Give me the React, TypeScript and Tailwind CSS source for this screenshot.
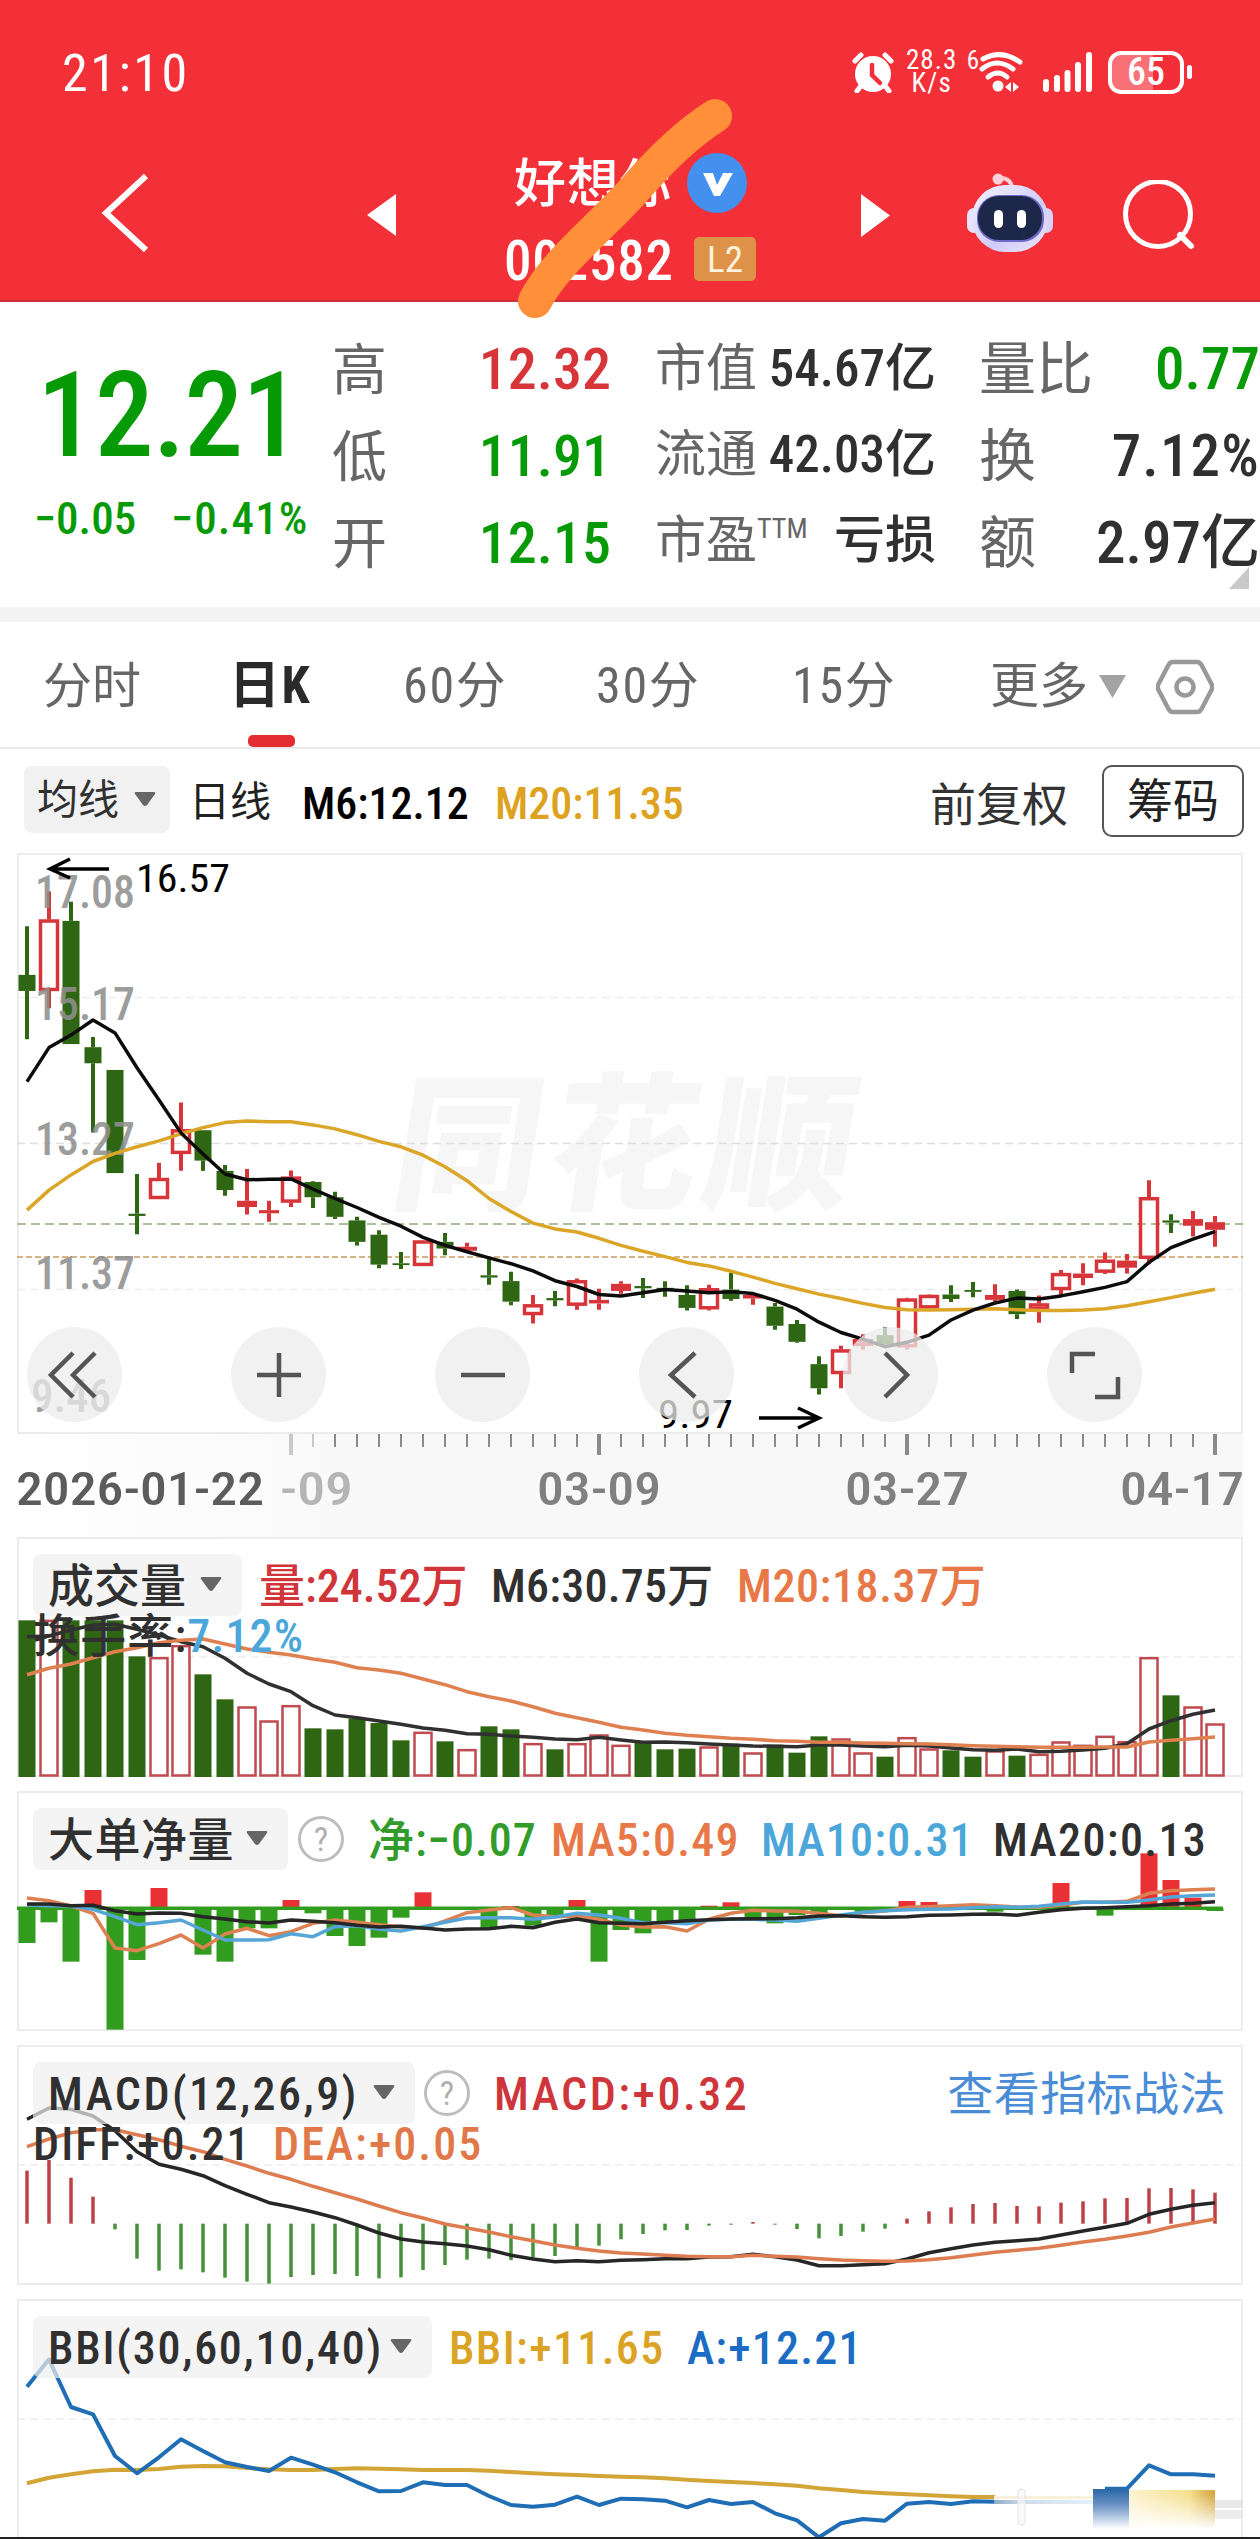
import type { ReactNode } from "react";

type Candle = [high: number, top: number, bottom: number, low: number, kind: "up" | "flat" | "down"];

const STEP = 22;
const FIRST_X = 27;
const xAt = (i: number) => FIRST_X + i * STEP;

const RED = "#d8353b";
const GREEN = "#2f6613";

const candles: Candle[] = [
  [193, 302, 338, 446, "down"],
  [115, 178, 338, 377, "up"],
  [138, 181, 457, 457, "down"],
  [441, 464, 500, 655, "down"],
  [515, 515, 746, 746, "down"],
  [748, 837, 842, 883, "down"],
  [723, 757, 804, 804, "up"],
  [588, 648, 703, 741, "up"],
  [650, 650, 718, 741, "down"],
  [728, 741, 784, 797, "down"],
  [737, 808, 822, 839, "flat"],
  [808, 829, 836, 855, "flat"],
  [740, 754, 812, 822, "up"],
  [764, 766, 800, 824, "down"],
  [788, 800, 844, 849, "down"],
  [844, 852, 900, 908, "down"],
  [874, 884, 951, 959, "down"],
  [923, 948, 952, 961, "down"],
  [897, 897, 954, 954, "up"],
  [880, 900, 915, 930, "down"],
  [902, 911, 920, 925, "flat"],
  [937, 975, 980, 996, "down"],
  [967, 988, 1034, 1042, "down"],
  [1019, 1040, 1064, 1083, "up"],
  [1010, 1026, 1031, 1044, "down"],
  [982, 986, 1043, 1052, "up"],
  [1005, 1030, 1038, 1052, "flat"],
  [988, 994, 1010, 1016, "flat"],
  [981, 999, 1004, 1026, "down"],
  [988, 1003, 1007, 1023, "down"],
  [997, 1019, 1048, 1054, "down"],
  [996, 1004, 1051, 1054, "up"],
  [970, 1007, 1028, 1032, "down"],
  [1017, 1019, 1027, 1041, "flat"],
  [1037, 1045, 1088, 1097, "down"],
  [1075, 1084, 1124, 1126, "down"],
  [1156, 1174, 1228, 1242, "down"],
  [1133, 1141, 1196, 1228, "up"],
  [1107, 1118, 1133, 1141, "up"],
  [1091, 1109, 1130, 1137, "down"],
  [1025, 1027, 1136, 1141, "up"],
  [1018, 1019, 1049, 1049, "up"],
  [997, 1018, 1028, 1035, "down"],
  [990, 1008, 1012, 1024, "down"],
  [995, 1019, 1030, 1034, "flat"],
  [1007, 1010, 1062, 1073, "down"],
  [1020, 1038, 1053, 1081, "up"],
  [963, 970, 1008, 1020, "up"],
  [948, 971, 981, 997, "flat"],
  [924, 940, 969, 972, "up"],
  [927, 942, 958, 971, "flat"],
  [762, 800, 938, 950, "up"],
  [838, 852, 857, 880, "down"],
  [831, 849, 864, 888, "flat"],
  [842, 856, 873, 911, "flat"],
];

const priceM6 = [
  541, 465, 437, 403, 432, 510, 582, 656, 703, 748, 761, 760, 759, 782, 803, 823, 845, 865, 890, 908, 922, 936, 949,
  965, 987, 1000, 1018, 1021, 1014, 1007, 1010, 1014, 1012, 1016, 1031, 1051, 1080, 1103, 1118, 1135, 1125, 1109, 1075,
  1053, 1037, 1026, 1028, 1021, 1012, 1002, 989, 946, 913, 894, 877,
];

const priceM20 = [
  829, 784, 750, 720, 702, 687, 674, 658, 644, 633, 629, 631, 631, 638, 647, 660, 675, 687, 706, 732, 763, 803, 832,
  858, 871, 878, 892, 908, 921, 933, 946, 954, 966, 979, 993, 1005, 1017, 1027, 1038, 1047, 1052, 1053, 1052, 1051,
  1050, 1052, 1054, 1054, 1053, 1050, 1043, 1034, 1025, 1015, 1006,
];

// positive closes up (hollow red), negative closes down (solid green)
const volumes = [
  -470, 470, -470, -470, -470, -362, 358, 394, -308, -233, 210, 168, 214, -146, -143, -175, -162, -110, 134, -107, 82,
  -152, -143, 100, -83, 100, 126, 95, -107, -83, -85, 90, -100, 72, -97, -73, -122, 114, 72, -61, 118, 84, -80, -61,
  78, -64, 68, 105, 95, 122, 106, 358, -245, 210, 159,
];

const volumeM6 = [
  320, 318, 300, 285, 283, 298, 315, 335, 350, 385, 430, 462, 485, 527, 555, 563, 573, 583, 594, 601, 611, 613, 618,
  622, 627, 629, 622, 630, 637, 636, 638, 642, 645, 648, 649, 650, 645, 645, 648, 650, 646, 648, 654, 659, 661, 657,
  665, 664, 660, 655, 641, 597, 572, 553, 540,
];

const volumeM20 = [
  434, 415, 402, 383, 365, 353, 338, 331, 327, 342, 357, 367, 375, 387, 397, 413, 420, 430, 447, 464, 485, 500, 513,
  530, 550, 563, 577, 592, 600, 610, 616, 620, 625, 628, 632, 634, 637, 637, 639, 640, 641, 642, 644, 647, 649, 650,
  652, 652, 652, 651, 651, 636, 631, 626, 621,
];

const netOrders = [
  -104, -42, -160, 55, -364, -155, 61, -4, -139, -160, -60, -60, 25, -15, -83, -113, -88, -28, 48, -3, -5, -60, 7, -52,
  -25, 25, -160, -65, -75, -45, -35, 8, 18, -30, -45, -20, -18, -4, -10, -10, 22, 19, -4, -4, -10, -5, -3, 76, 4, -22,
  -2, 165, 85, 32, -8,
];

const netMa20 = [
  1122, 1122, 1127, 1126, 1142, 1152, 1149, 1150, 1160, 1167, 1175, 1179, 1170, 1174, 1178, 1186, 1191, 1189, 1194,
  1200, 1197, 1196, 1189, 1193, 1177, 1167, 1178, 1180, 1181, 1177, 1172, 1169, 1167, 1166, 1166, 1163, 1158, 1157,
  1160, 1162, 1160, 1156, 1155, 1153, 1152, 1156, 1147, 1139, 1135, 1133, 1130, 1127, 1122, 1120, 1115,
];

const netMa10 = [
  1125, 1127, 1128, 1138, 1160, 1184, 1178, 1170, 1200, 1230, 1230, 1229, 1211, 1220, 1190, 1187, 1198, 1203, 1190,
  1177, 1164, 1163, 1163, 1168, 1161, 1150, 1155, 1165, 1178, 1178, 1181, 1170, 1168, 1168, 1170, 1174, 1165, 1155,
  1147, 1142, 1139, 1138, 1137, 1133, 1130, 1132, 1129, 1122, 1116, 1117, 1117, 1110, 1101, 1097, 1095,
];

const netMa5 = [
  1104, 1112, 1128, 1150, 1254, 1262, 1241, 1215, 1254, 1212, 1195, 1217, 1205, 1180, 1170, 1177, 1184, 1190, 1195,
  1173, 1148, 1140, 1133, 1155, 1160, 1158, 1168, 1185, 1191, 1190, 1203, 1168, 1150, 1141, 1143, 1144, 1150, 1157,
  1148, 1143, 1132, 1130, 1127, 1124, 1127, 1131, 1132, 1125, 1117, 1117, 1114, 1090, 1082, 1079, 1077,
];

const macdEnds = [
  422, 390, 443, 500, 598, 686, 722, 718, 727, 743, 755, 761, 741, 735, 732, 738, 745, 742, 720, 705, 689, 686, 690,
  683, 678, 652, 647, 628, 612, 601, 600, 587, 584, 576, 584, 597, 625, 618, 605, 596, 566, 544, 532, 522, 519, 528,
  529, 518, 514, 505, 504, 475, 474, 478, 488,
];

const macdDiff = [
  268, 234, 238, 258, 302, 365, 403, 418, 437, 467, 493, 518, 531, 546, 563, 585, 609, 627, 636, 641, 648, 659, 676,
  687, 695, 692, 695, 691, 689, 686, 686, 681, 680, 673, 680, 690, 707, 707, 704, 701, 687, 668, 656, 645, 637, 632,
  627, 615, 603, 592, 580, 553, 538, 526, 518,
];

const macdDea = [
  350, 327, 308, 299, 299, 314, 329, 349, 365, 388, 408, 430, 448, 469, 488, 507, 528, 548, 564, 582, 594, 606, 620,
  632, 645, 655, 663, 669, 672, 676, 679, 680, 680, 676, 679, 681, 686, 690, 692, 694, 693, 689, 683, 675, 667, 661,
  655, 646, 636, 628, 618, 607, 591, 579, 567,
];

const bbiClose = [
  1070, 988, 1131, 1153, 1278, 1330, 1282, 1228, 1263, 1297, 1311, 1323, 1283, 1304, 1327, 1357, 1384, 1383, 1357,
  1365, 1365, 1398, 1425, 1430, 1424, 1400, 1425, 1406, 1408, 1412, 1432, 1410, 1422, 1416, 1450, 1471, 1522, 1480,
  1467, 1472, 1421, 1416, 1422, 1414, 1415,
];

const bbiTail = [1376, 1376, 1306, 1333, 1333, 1337];

const bbiAverage = [
  1360, 1343, 1333, 1324, 1319, 1320, 1317, 1310, 1308, 1309, 1314, 1318, 1320, 1320, 1317, 1315, 1316, 1318, 1320,
  1320, 1320, 1322, 1326, 1330, 1333, 1335, 1338, 1340, 1342, 1345, 1349, 1353, 1356, 1359, 1363, 1367, 1375, 1380,
  1386, 1390, 1393, 1396, 1399, 1401, 1401,
];

type SeriesProps = {
  values: number[];
  top: number;
  scale?: number;
  color: string;
  width?: number;
  from?: number;
};

function Series({ values, top, scale = 3, color, width = 3.5, from = 0 }: SeriesProps) {
  const points = values.map((v, i) => `${xAt(i + from)},${((v - top) / scale).toFixed(1)}`).join(" ");
  return <polyline points={points} fill="none" stroke={color} strokeWidth={width} strokeLinejoin="round" />;
}

function GridLine({ y, color = "#ededed", dash = "8 5" }: { y: number; color?: string; dash?: string }) {
  return <line x1={17} x2={1243} y1={y} y2={y} stroke={color} strokeWidth={1.5} strokeDasharray={dash} />;
}

function Label({ x, y, width, children, fill }: { x: number; y: number; width: number; children: string; fill?: string }) {
  return (
    <text x={x} y={y} textLength={width} lengthAdjust="spacingAndGlyphs" fill={fill}>
      {children}
    </text>
  );
}

function Caret() {
  return (
    <svg className="h-[15px] w-[22px]" viewBox="0 0 22 15">
      <path d="M2 0h18q2 0 1 2l-8 11q-2 2-4 0L1 2q-1-2 1-2z" fill="#666" />
    </svg>
  );
}

function Help() {
  return (
    <span className="flex size-[46px] shrink-0 items-center justify-center rounded-full border-[3px] border-[#bdbdbd] text-[34px] font-normal leading-none text-[#b0b0b0]">
      ?
    </span>
  );
}

function Panel({ children, chart }: { children: ReactNode; chart: ReactNode }) {
  return (
    <section className="relative h-[240px] border-2 border-[#ececec]">
      <svg className="absolute -left-0.5 -top-0.5 h-[240px] w-[1226px]" viewBox="17 0 1226 240">
        {chart}
      </svg>
      <div className="relative pl-[14px] pt-[14px] text-[46px] font-medium leading-[50px] text-[#303030]">
        {children}
      </div>
    </section>
  );
}

function Legend({ children }: { children: ReactNode }) {
  return <div className="flex h-[63px] items-center whitespace-nowrap">{children}</div>;
}

function Picker({ children, className }: { children: ReactNode; className: string }) {
  return (
    <div
      className={`flex h-[62px] shrink-0 items-center justify-between rounded-lg bg-[#efefef]/70 pl-[15px] pr-5 ${className}`}
    >
      <span className="pt-[3px]">{children}</span>
      <Caret />
    </div>
  );
}

function StatusBar() {
  return (
    <div className="flex h-[144px] items-center pl-[62px] pr-[68px] text-white">
      <span className="mt-1 text-[52px] font-normal tracking-[0.05em]">21:10</span>
      <div className="ml-auto flex items-center">
        <svg className="h-[42px] w-[42px]" viewBox="0 0 42 42">
          <circle cx="21" cy="23" r="18" fill="#fff" />
          <path
            d="M3 10l6-6M39 10l-6-6M8 36l-3 4M34 36l3 4"
            stroke="#fff"
            strokeWidth="5"
            strokeLinecap="round"
            fill="none"
          />
          <path d="M20 14v10l8 8" stroke="#f22f38" strokeWidth="4.5" fill="none" strokeLinecap="round" />
        </svg>
        <div className="ml-3 flex w-[52px] flex-col items-center text-[27px] font-normal leading-[23px]">
          <span className="tracking-[0.04em]">28.3</span>
          <span className="tracking-[0.04em]">K/s</span>
        </div>
        <span className="ml-[9px] self-start text-[25px] leading-[23px]">6</span>
        <svg className="h-[42px] w-[44px]" viewBox="0 0 44 42">
          <g fill="none" stroke="#fff" strokeWidth="5" strokeLinecap="round">
            <path d="M4 8q18-10 37 3" />
            <path d="M3 18q15-12 31 0" />
            <path d="M9 26q10-8 19 0" />
          </g>
          <circle cx="19" cy="35" r="5.5" fill="#fff" />
          <path d="M26 36l6-5v10zM40 36l-6-5v10z" fill="#fff" />
        </svg>
        <svg className="ml-5 h-[40px] w-[50px]" viewBox="0 0 50 40">
          <rect x="0" y="27" width="6" height="13" rx="3" fill="#fff" />
          <rect x="11" y="23" width="6" height="17" rx="3" fill="#fff" />
          <rect x="21.5" y="18" width="6" height="22" rx="3" fill="#fff" />
          <rect x="32" y="10" width="6" height="30" rx="3" fill="#fff" />
          <rect x="43" y="0" width="6" height="40" rx="3" fill="#fff" />
        </svg>
        <div className="ml-[15px] flex h-[43px] w-[76px] items-center justify-center rounded-[13px] border-4 border-white bg-linear-to-r from-[#f97077] from-60% to-[#f22f38] to-60% text-[38px] font-medium leading-none">
          65
        </div>
        <span className="ml-[3px] h-[14px] w-[5px] rounded-full bg-white" />
      </div>
    </div>
  );
}

function Robot() {
  return (
    <svg className="h-[82px] w-[88px]" viewBox="0 0 88 82">
      <defs>
        <linearGradient id="shell" x1="0" y1="0" x2="1" y2="1">
          <stop offset="0" stopColor="#f4f3ff" />
          <stop offset="0.6" stopColor="#cfcdf8" />
          <stop offset="1" stopColor="#efe6fb" />
        </linearGradient>
      </defs>
      <circle cx="32" cy="7" r="5.5" fill="#ffd0d8" />
      <path d="M34 6q11 0 12 10" stroke="#ffd0d8" strokeWidth="4" fill="none" />
      <rect x="1" y="36" width="14" height="25" rx="7" fill="#e8e3fb" />
      <rect x="73" y="36" width="14" height="25" rx="7" fill="#d9d2f7" />
      <rect x="6" y="13" width="76" height="67" rx="33" fill="url(#shell)" />
      <rect x="11" y="23" width="67" height="47" rx="22" fill="#6f69c9" />
      <rect x="12" y="24" width="64" height="44" rx="21" fill="#1c2749" />
      <rect x="28" y="38" width="9" height="18" rx="4.5" fill="#fff" />
      <rect x="51" y="38" width="9" height="18" rx="4.5" fill="#fff" />
    </svg>
  );
}

function Header() {
  return (
    <header className="relative h-[302px] border-b-2 border-[#c9323a] bg-[#f32f38] text-white">
      <StatusBar />
      <div className="flex items-start">
        <svg className="ml-[99px] mt-7 h-[82px] w-[50px]" viewBox="0 0 50 82">
          <path d="M47 4L7 41l40 37" fill="none" stroke="#fff" strokeWidth="6" />
        </svg>
        <svg className="ml-[218px] mt-[50px] h-[42px] w-[30px]" viewBox="0 0 30 42">
          <path d="M29 0v42L0 21z" fill="#fff" />
        </svg>
        <div className="ml-[107px] w-[260px]">
          <div className="ml-[10px] mt-2 flex h-[62px] items-center">
            <span className="mt-1 w-[173px] text-[52px] font-medium leading-[62px] tracking-[0.02em]">好想你</span>
            <svg className="size-[60px]" viewBox="0 0 60 60">
              <circle cx="30" cy="30" r="30" fill="#4490ee" />
              <path d="M16 20h10l4 12 6-12h10L33 43h-6z" fill="#fff" />
            </svg>
          </div>
          <div className="mt-[14px] flex h-[62px] items-center">
            <span className="mt-1 w-[190px] text-[55px] font-medium leading-[62px] tracking-[0.015em]">002582</span>
            <span className="flex h-[44px] w-[62px] items-center justify-center rounded-[5px] bg-[#de9149] text-[37px] font-normal leading-none text-[#fff3dc]">
              L2
            </span>
          </div>
        </div>
        <svg className="ml-[97px] mt-[50px] h-[43px] w-[30px]" viewBox="0 0 30 43">
          <path d="M0 0v43l29-21.500z" fill="#fff" />
        </svg>
        <div className="ml-[75px] mt-[28px]">
          <Robot />
        </div>
        <svg className="ml-[68px] mt-9 h-[72px] w-[76px]" viewBox="0 0 76 72">
          <circle cx="36" cy="34" r="32.500" fill="none" stroke="#fff" strokeWidth="5" />
          <path d="M58 55l11 11" stroke="#fff" strokeWidth="6" strokeLinecap="round" />
        </svg>
      </div>
      {/* highlighter stroke drawn across the stock name */}
      <svg className="absolute left-[500px] top-[80px] h-[250px] w-[250px]" viewBox="500 80 250 250">
        <path
          d="M535 301C555 262 600 228 634 190C660 160 685 135 715 116"
          fill="none"
          stroke="#ff8f39"
          strokeWidth="34"
          strokeLinecap="round"
        />
      </svg>
    </header>
  );
}

function QuoteRow({ label, value, color = "text-[#303030]" }: { label: ReactNode; value: string; color?: string }) {
  return (
    <div className="flex justify-between whitespace-nowrap">
      <span className="font-normal text-[#666]">{label}</span>
      <span className={color}>{value}</span>
    </div>
  );
}

function Quote() {
  return (
    <section className="relative flex h-[305px] overflow-hidden font-medium">
      <div className="w-[332px] pl-[34px] pt-[49px] text-[#069a06]">
        <p className="pl-[3px] text-[118px] leading-[130px] tracking-[-0.01em]">12.21</p>
        <div className="mt-[13px] flex whitespace-nowrap text-[45px] leading-[50px]">
          <span className="w-[137px]">−0.05</span>
          <span className="tracking-[0.025em]">−0.41%</span>
        </div>
      </div>
      <div className="w-[279px] pt-6 text-[58px] leading-[86px]">
        <QuoteRow label={<span className="text-[55px]">高</span>} value="12.32" color="text-[#d8353b]" />
        <QuoteRow label={<span className="text-[55px]">低</span>} value="11.91" color="text-[#069a06]" />
        <QuoteRow label={<span className="text-[55px]">开</span>} value="12.15" color="text-[#069a06]" />
      </div>
      <div className="ml-[44px] w-[281px] pt-6 text-[51px] leading-[86px]">
        <QuoteRow label="市值" value="54.67亿" />
        <QuoteRow label="流通" value="42.03亿" />
        <QuoteRow
          label={
            <span className="flex">
              市盈<span className="-mt-3 text-[28px]">TTM</span>
            </span>
          }
          value="亏损"
        />
      </div>
      <div className="ml-[43px] w-[281px] pt-6 text-[59px] leading-[86px]">
        <QuoteRow label={<span className="text-[57px]">量比</span>} value="0.77" color="text-[#069a06]" />
        <QuoteRow label={<span className="text-[57px]">换</span>} value="7.12%" color="tracking-[0.02em] text-[#303030]" />
        <QuoteRow label={<span className="text-[57px]">额</span>} value="2.97亿" />
      </div>
      <svg className="absolute bottom-[18px] right-[11px] h-[22px] w-[20px]" viewBox="0 0 20 22">
        <path d="M20 0v22H0z" fill="#c9c9c9" />
      </svg>
    </section>
  );
}

function PeriodTabs() {
  return (
    <nav className="flex h-[127px] items-center border-b-2 border-[#e8e8e8] pl-[43px] pt-1 text-[49px] font-normal text-[#666]">
      <span className="w-[186px]">分时</span>
      <span className="relative flex h-full w-[174px] items-center text-[51px] font-bold tracking-[0.03em] text-[#2a2a2a]">
        日K
        <span className="absolute bottom-0 left-[19px] h-3 w-[47px] rounded-[5px] bg-[#e32d33]" />
      </span>
      <span className="w-[193px] text-[50px] tracking-[0.035em]">60分</span>
      <span className="w-[196px] text-[50px] tracking-[0.035em]">30分</span>
      <span className="w-[198px] text-[50px] tracking-[0.035em]">15分</span>
      <span>更多</span>
      <svg className="ml-[11px] h-[23px] w-[27px]" viewBox="0 0 27 23">
        <path d="M0 0h27L13.500 23z" fill="#a3a3a3" />
      </svg>
      <svg className="ml-[30px] h-[56px] w-[58px]" viewBox="0 0 58 56">
        <path
          d="M17 3h24q3 0 4.500 3l10 19q1.500 3 0 6l-10 19q-1.500 3-4.500 3H17q-3 0-4.500-3l-10-19q-1.500-3 0-6l10-19Q14 3 17 3z"
          fill="none"
          stroke="#999"
          strokeWidth="4.500"
        />
        <circle cx="29" cy="28" r="8.500" fill="none" stroke="#999" strokeWidth="4.500" />
      </svg>
    </nav>
  );
}

function AverageBar() {
  return (
    <div className="flex h-[104px] items-center pl-6 pr-4 text-[44px] font-medium">
      <div className="mb-1 flex h-[67px] w-[146px] items-center justify-between rounded-lg bg-[#f1f1f1] pl-[13px] pr-[14px] text-[41px] font-normal text-[#303030]">
        <span className="pt-1">均线</span>
        <Caret />
      </div>
      <span className="ml-[19px] mt-1 w-[113px] text-[41px] font-normal text-[#222]">日线</span>
      <span className="mt-1.5 w-[193px] whitespace-nowrap text-black">M6:12.12</span>
      <span className="mt-1.5 whitespace-nowrap text-[#dda220]">M20:11.35</span>
      <span className="ml-auto mt-2 text-[46px] font-normal text-[#333]">前复权</span>
      <span className="ml-[34px] flex h-[72px] w-[142px] items-center justify-center rounded-[10px] border-2 border-[#555] text-[46px] font-normal text-[#222]">
        筹码
      </span>
    </div>
  );
}

const controls: { name: string; path: string }[] = [
  { name: "first", path: "M46 26L24 48l22 22M68 26L46 48l22 22" },
  { name: "zoom in", path: "M26 48h44M48 26v44" },
  { name: "zoom out", path: "M26 48h44" },
  { name: "previous", path: "M56 26L32 48l24 22" },
  { name: "next", path: "M42 26l22 22-22 22" },
  { name: "fullscreen", path: "M25 46V27h23M71 50v20H48" },
];

const priceY = (v: number) => (v - 29) / 2.24;

function PriceChart() {
  return (
    <section className="relative h-[581px] border-2 border-[#ececec]">
      <svg className="absolute -left-0.5 -top-0.5 h-[581px] w-[1226px]" viewBox="17 0 1226 581">
        <text
          x="420"
          y="345"
          fontSize="148"
          fontWeight="900"
          fill="#f6f6f6"
          textLength="460"
          transform="translate(22 0) skewX(-9)"
        >
          同花顺
        </text>
        <GridLine y={144.5} />
        <GridLine y={290.5} color="#dedede" />
        <GridLine y={436.5} />
        <GridLine y={371} color="#8fae7c" dash="9 5" />
        <GridLine y={404} color="#c99a5a" dash="6 3" />
        {candles.map(([high, top, bottom, low, kind], i) => {
          const x = xAt(i);
          const color = kind === "down" ? GREEN : RED;
          const y = priceY(top);
          const h = priceY(bottom) - y;
          return (
            <g key={i} stroke={color} fill={color}>
              <path d={`M${x} ${priceY(high)}V${y}M${x} ${y + h}V${priceY(low)}`} strokeWidth="4" />
              {kind === "up" && (
                <rect x={x - 8.5} y={y + 1.5} width={17} height={h - 3} fill="none" strokeWidth="3.500" />
              )}
              {kind === "flat" && <rect x={x - 10} y={y} width={20} height={h} stroke="none" />}
              {kind === "down" && <rect x={x - 8.5} y={y} width={17} height={h} stroke="none" />}
            </g>
          );
        })}
        <g fill="#8f8f8f" fillOpacity="0.9" fontSize="46" fontWeight="500">
          <Label x={35} y={55} width={100}>17.08</Label>
          <Label x={35} y={167} width={100}>15.17</Label>
          <Label x={35} y={302} width={100}>13.27</Label>
          <Label x={35} y={436} width={100}>11.37</Label>
          <Label x={31} y={559} width={80}>9.46</Label>
        </g>
        <Series values={priceM20} top={29} scale={2.24} color="#dba528" />
        <Series values={priceM6} top={29} scale={2.24} color="#0c0c0c" />
        <g fill="none" stroke="#000" strokeWidth="3.500">
          <path d="M109 16H50M70 6L50 16l20 9" />
          <path d="M759 565h60M798 555l21 10-21 10" />
        </g>
        <g fontSize="39" fill="#000">
          <Label x={136} y={39} width={94}>16.57</Label>
          <Label x={658} y={575} width={75}>9.97</Label>
        </g>
      </svg>
      <div className="absolute bottom-[10px] left-[8px] flex gap-[109px]">
        {controls.map(({ name, path }) => (
          <button key={name} aria-label={name} className="size-[95px] rounded-full bg-[#ececec]/75">
            <svg className="size-[95px]" viewBox="0 0 95 95">
              <path d={path} fill="none" stroke="#555" strokeWidth="4.500" />
            </svg>
          </button>
        ))}
      </div>
    </section>
  );
}

function DateAxis() {
  const ticks = Array.from({ length: 43 }, (_, k) => k + 12);
  return (
    <div className="h-[103px] bg-linear-to-r from-white to-[#f8f8f8] to-30%">
      <svg className="h-[103px] w-[1226px]" viewBox="17 0 1226 103">
        {ticks.map((i) => {
          const major = i === 12 || i === 26 || i === 40 || i === 54;
          return (
            <line
              key={i}
              x1={xAt(i)}
              x2={xAt(i)}
              y1={0}
              y2={major ? 21 : 13}
              stroke={i < 14 ? "#c9c9c9" : "#8a8a8a"}
              strokeWidth={major ? 4 : 2}
            />
          );
        })}
        <g fontSize="46.500" fontWeight="500" fill="#808080">
          <Label x={16} y={71} width={248} fill="#5c5c5c">2026-01-22</Label>
          <Label x={280} y={71} width={73} fill="#b5b5b5">-09</Label>
          <Label x={537} y={71} width={124}>03-09</Label>
          <Label x={845} y={71} width={124}>03-27</Label>
          <Label x={1120} y={71} width={124}>04-17</Label>
        </g>
      </svg>
    </div>
  );
}

function VolumeChart() {
  return (
    <>
      <GridLine y={120} />
      {volumes.map((v, i) => {
        const x = xAt(i) - 8.5;
        const h = Math.abs(v) / 3;
        return v > 0 ? (
          <rect key={i} x={x} y={240.5 - h} width={17} height={h - 2} fill="#fff" stroke="#bf4a4f" strokeWidth="2.500" />
        ) : (
          <rect key={i} x={x} y={240 - h} width={17} height={h} fill={GREEN} />
        );
      })}
      <Series values={volumeM6} top={21} color="#303030" />
      <Series values={volumeM20} top={21} color="#df8051" />
    </>
  );
}

function NetOrderChart() {
  const base = (1135 - 783) / 3;
  return (
    <>
      {netOrders.map((v, i) => {
        const h = Math.abs(v) / 3;
        return (
          <rect
            key={i}
            x={xAt(i) - 8.5}
            y={v > 0 ? base - h : base}
            width={17}
            height={h}
            fill={v > 0 ? "#e93034" : "#319c1d"}
          />
        );
      })}
      <line x1={17} x2={1223} y1={base} y2={base} stroke="#319c1d" strokeWidth="3.500" />
      <Series values={netMa5} top={783} color="#dd8052" />
      <Series values={netMa10} top={783} color="#55a5d6" />
      <Series values={netMa20} top={783} color="#262626" />
    </>
  );
}

function MacdChart() {
  const base = (581 - 45) / 3;
  return (
    <>
      <GridLine y={120} />
      {macdEnds.map((v, i) => (
        <line
          key={i}
          x1={xAt(i)}
          x2={xAt(i)}
          y1={base}
          y2={(v - 45) / 3}
          stroke={v < 581 ? "#bb4147" : "#46923a"}
          strokeWidth="3.500"
        />
      ))}
      <Series values={macdDiff} top={45} color="#262626" />
      <Series values={macdDea} top={45} color="#dd7c50" />
    </>
  );
}

function BbiChart() {
  return (
    <>
      <defs>
        <linearGradient id="blueFade" x1="0" y1="0" x2="0" y2="1">
          <stop offset="0" stopColor="#2b67a8" />
          <stop offset="0.4" stopColor="#6b93c4" />
          <stop offset="1" stopColor="#fff" />
        </linearGradient>
        <linearGradient id="goldRun" x1="0" y1="0" x2="1" y2="0">
          <stop offset="0" stopColor="#fdf3cf" />
          <stop offset="0.7" stopColor="#f5df8f" />
          <stop offset="1" stopColor="#d3a43c" />
        </linearGradient>
        <linearGradient id="whiteFade" x1="0" y1="0" x2="0" y2="1">
          <stop offset="0.1" stopColor="#fff" stopOpacity="0" />
          <stop offset="1" stopColor="#fff" />
        </linearGradient>
        <linearGradient id="lineFade" x1="0" y1="0" x2="1" y2="0">
          <stop offset="0" stopColor="#8fabc9" />
          <stop offset="0.3" stopColor="#cfdde9" />
          <stop offset="1" stopColor="#e2f2fb" />
        </linearGradient>
      </defs>
      <GridLine y={120} />
      <Series values={bbiAverage} top={807} color="#d3a536" width={4} />
      <Series values={bbiClose} top={807} color="#1f6db5" width={4} />
      <Series values={bbiTail} from={49} top={807} color="#1f6db5" width={4} />
      <rect x="994" y="197" width="99" height="3" fill="#f8f1dc" />
      <rect x="994" y="201" width="99" height="4" fill="url(#lineFade)" />
      <rect x="1018" y="190" width="7" height="36" rx="3" fill="#f6f6f6" fillOpacity="0.7" stroke="#e4e4e4" />
      <rect x="1093" y="190" width="36" height="40" fill="url(#blueFade)" />
      <rect x="1129" y="191" width="86" height="39" fill="url(#goldRun)" />
      <rect x="1129" y="191" width="86" height="39" fill="url(#whiteFade)" />
      <rect x="1215" y="201" width="28" height="8" fill="#e0e0e0" fillOpacity="0.7" />
      <rect x="1215" y="211" width="28" height="9" fill="#e6e6e6" fillOpacity="0.7" />
    </>
  );
}

export default function App() {
  return (
    <div className="h-[2539px] w-[1260px] overflow-hidden border-b-2 border-[#222] bg-white font-['Roboto_Condensed','Noto_Sans_CJK_SC',sans-serif]">
      <Header />
      <Quote />
      <div className="h-[15px] bg-[#f4f4f4]" />
      <PeriodTabs />
      <AverageBar />
      <main className="ml-[17px] w-[1226px]">
        <PriceChart />
        <DateAxis />
        <div className="flex flex-col gap-[14px]">
          <Panel chart={<VolumeChart />}>
            <Legend>
              <Picker className="w-[209px]">成交量</Picker>
              <span className="ml-[17px] w-[232px] pt-[3px] text-[#d0353a]">量:24.52万</span>
              <span className="w-[246px] pt-[3px] tracking-[0.005em]">M6:30.75万</span>
              <span className="pt-[3px] tracking-[0.013em] text-[#e87848]">M20:18.37万</span>
            </Legend>
            <div className="-mt-[5px] tracking-[0.025em]">
              换手率:<span className="text-[#4ba7da]">7.12%</span>
            </div>
          </Panel>
          <Panel chart={<NetOrderChart />}>
            <Legend>
              <Picker className="mr-[10px] w-[255px] tracking-[0.01em]">大单净量</Picker>
              <Help />
              <span className="ml-6 w-[183px] pt-[3px] tracking-[0.02em] text-[#319c2a]">净:−0.07</span>
              <span className="w-[210px] pt-[3px] tracking-[0.027em] text-[#e87848]">MA5:0.49</span>
              <span className="w-[232px] pt-[3px] tracking-[0.027em] text-[#4ba7da]">MA10:0.31</span>
              <span className="pt-[3px] tracking-[0.03em]">MA20:0.13</span>
            </Legend>
          </Panel>
          <Panel chart={<MacdChart />}>
            <Legend>
              <Picker className="mr-[9px] w-[382px] tracking-[0.053em]">MACD(12,26,9)</Picker>
              <Help />
              <span className="ml-6 pt-[3px] tracking-[0.055em] text-[#cf363b]">MACD:+0.32</span>
              <a className="ml-auto mr-[15px] pt-[3px] font-normal tracking-[0.01em] text-[#4a8cd6]">查看指标战法</a>
            </Legend>
            <div className="-mt-[5px] flex whitespace-nowrap tracking-[0.045em]">
              <span className="w-[240px]">DIFF:+0.21</span>
              <span className="text-[#e07848]">DEA:+0.05</span>
            </div>
          </Panel>
          <Panel chart={<BbiChart />}>
            <Legend>
              <Picker className="w-[399px] tracking-[0.038em]">BBI(30,60,10,40)</Picker>
              <span className="ml-[17px] w-[238px] pt-[3px] tracking-[0.03em] text-[#dba325]">BBI:+11.65</span>
              <span className="pt-[3px] tracking-[0.027em] text-[#1b6cc4]">A:+12.21</span>
            </Legend>
          </Panel>
        </div>
      </main>
    </div>
  );
}
